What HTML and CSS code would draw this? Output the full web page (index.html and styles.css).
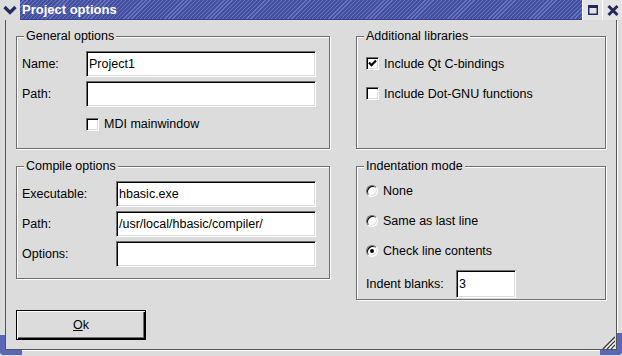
FILE: index.html
```html
<!DOCTYPE html>
<html lang="en">

<head>
    <meta charset="UTF-8">
    <meta name="viewport" content="width=device-width, initial-scale=1.0">
    <title>Project options</title>
    <link rel="stylesheet" href="styles.css">
</head>

<body>

    <div class="window">

        <!-- Title bar -->
        <div class="titlebar">
            <div class="tb-menu">
                <svg width="14" height="10" viewBox="0 0 14 10">
                    <polyline points="1.5,2 7,7.5 12.5,2" fill="none" stroke="#232a5c" stroke-width="3.2" />
                </svg>
            </div>
            <div class="tb-title">Project options</div>
            <div class="tb-btn">
                <svg width="20" height="20" viewBox="0 0 20 20">
                    <rect x="5" y="5" width="10" height="3" fill="#232a5c" />
                    <rect x="5.75" y="5.75" width="8.5" height="8.5" fill="none" stroke="#232a5c" stroke-width="1.5" />
                </svg>
            </div>
            <div class="tb-btn">
                <svg width="20" height="20" viewBox="0 0 20 20">
                    <path d="M5.5 6 L14.5 15 M14.5 6 L5.5 15" stroke="#232a5c" stroke-width="3" />
                </svg>
            </div>
        </div>

        <!-- Client area -->
        <div class="frame">
            <div class="client">
                <div class="columns">

                    <div class="col col-left">
                        <div class="group group-short">
                            <div class="group-title">General options</div>
                            <div class="form form-general">
                                <label>Name:</label>
                                <input class="edit" type="text" value="Project1">
                                <label>Path:</label>
                                <input class="edit" type="text" value="">
                                <div class="opt opt-grid"><span class="check"></span>MDI mainwindow</div>
                            </div>
                        </div>

                        <div class="group group-short">
                            <div class="group-title">Compile options</div>
                            <div class="form form-compile">
                                <label>Executable:</label>
                                <input class="edit" type="text" value="hbasic.exe">
                                <label>Path:</label>
                                <input class="edit" type="text" value="/usr/local/hbasic/compiler/">
                                <label>Options:</label>
                                <input class="edit" type="text" value="">
                            </div>
                        </div>

                        <button class="ok-btn"><u>O</u>k</button>
                    </div>

                    <div class="col col-right">
                        <div class="group group-short">
                            <div class="group-title">Additional libraries</div>
                            <div class="opt-list">
                                <div class="opt">
                                    <span class="check">
                                        <svg width="11" height="11" viewBox="0 0 11 11">
                                            <path d="M2 4.5 L4.5 7.2 L9 2.5" fill="none" stroke="#000" stroke-width="2.2" />
                                        </svg>
                                    </span>Include Qt C-bindings
                                </div>
                                <div class="opt"><span class="check"></span>Include Dot-GNU functions</div>
                            </div>
                        </div>

                        <div class="group group-tall">
                            <div class="group-title">Indentation mode</div>
                            <div class="opt-list opt-radios">
                                <div class="opt"><span class="radio"></span>None</div>
                                <div class="opt"><span class="radio"></span>Same as last line</div>
                                <div class="opt"><span class="radio checked"></span>Check line contents</div>
                            </div>
                            <div class="indent-row">
                                <label>Indent blanks:</label>
                                <input class="edit edit-small" type="text" value="3">
                            </div>
                        </div>
                    </div>

                </div>
            </div>
        </div>

        <!-- Window frame corners -->
        <div class="corner corner-bl"></div>
        <div class="corner corner-br"></div>
        <svg class="grip" width="13" height="13" viewBox="0 0 13 13">
            <path d="M1 13 L13 1 M5 13 L13 5 M9 13 L13 9" stroke="#3a3a3a" stroke-width="1.5" />
            <path d="M3 13 L13 3 M7 13 L13 7 M11 13 L13 11" stroke="#fff" stroke-width="1.2" />
        </svg>

    </div>

</body>

</html>
```

FILE: styles.css
```css
/* General */
* {
    box-sizing: border-box;
}

body {
    margin: 0;
    width: 622px;
    height: 356px;
    overflow: hidden;
    background-color: #dcdcdc;
    font-family: "Liberation Sans", Arial, sans-serif;
    font-size: 12.5px;
    color: #000;
}

.window {
    position: relative;
    height: 356px;
    display: flex;
    flex-direction: column;
}

/* Title bar */
.titlebar {
    display: flex;
    height: 20px;
}

.tb-menu {
    width: 20px;
    display: flex;
    align-items: center;
    justify-content: center;
    background-color: #dcdcdc;
}

.tb-title {
    flex: 1;
    padding-left: 2px;
    background: repeating-linear-gradient(135deg, #43509f 0 2px, #6774bf 2px 2.9px);
    border-bottom: 1px solid #36428a;
    color: #fff;
    font-weight: bold;
    font-size: 13px;
    line-height: 19px;
}

.tb-btn {
    width: 20px;
    background-color: #e4e4e4;
    border-left: 1px solid #fff;
}

.tb-btn svg {
    display: block;
}

/* Frame around the client area */
.frame {
    flex: 1;
    display: flex;
    padding: 0 5px 6px 5px;
}

.client {
    flex: 1;
    border: 1px solid #555;
    border-top: none;
    box-shadow: 1px 1px 0 #fff;
    padding: 16px 10px 0 10px;
}

.columns {
    display: flex;
    gap: 26px;
}

.col {
    display: flex;
    flex-direction: column;
    gap: 17px;
}

.col-left {
    width: 314px;
}

.col-right {
    width: 250px;
}

/* Group boxes */
.group {
    display: flex;
    flex-direction: column;
    border: 1px solid #6e6e6e;
    box-shadow: inset 1px 1px 0 #fff, 1px 1px 0 #fff;
    padding: 0 13px 0 5px;
}

.group-short {
    height: 113px;
}

.group-tall {
    height: 134px;
}

.group-title {
    align-self: flex-start;
    margin: -8px 0 0 2px;
    padding: 0 2px;
    background-color: #dcdcdc;
    line-height: 14px;
}

/* Label + field grids */
.form {
    display: grid;
    grid-auto-rows: 26px;
    row-gap: 4px;
    align-items: center;
    margin-top: 8px;
}

.form-general {
    grid-template-columns: 64px 1fr;
}

.form-compile {
    grid-template-columns: 94px 1fr;
}

.edit {
    width: 100%;
    height: 26px;
    margin: 0;
    padding: 0 2px;
    border: 1px solid;
    border-color: #6e6e6e #fff #fff #6e6e6e;
    box-shadow: inset 1px 1px 0 #000, inset -1px -1px 0 #dcdcdc;
    background-color: #fff;
    font: inherit;
    color: #000;
    outline: none;
}

.edit-small {
    width: 60px;
    height: 28px;
}

/* Check boxes and radio buttons */
.opt {
    display: flex;
    align-items: center;
    gap: 5px;
    height: 13px;
    white-space: nowrap;
}

.opt-grid {
    grid-column: 2;
}

.opt-list {
    display: flex;
    flex-direction: column;
    gap: 17px;
    margin: 14px 0 0 4px;
}

.opt-radios {
    margin-top: 11px;
}

.check {
    width: 13px;
    height: 13px;
    flex: none;
    border: 1px solid;
    border-color: #6e6e6e #fff #fff #6e6e6e;
    box-shadow: inset 1px 1px 0 #000, inset -1px -1px 0 #dcdcdc;
    background-color: #fff;
}

.check svg {
    display: block;
}

.radio {
    position: relative;
    width: 12px;
    height: 12px;
    flex: none;
    border-radius: 50%;
    border: 1px solid;
    border-color: #6e6e6e #fff #fff #6e6e6e;
    box-shadow: inset 1px 1px 0 #000, inset -1px -1px 0 #dcdcdc;
    background-color: #fff;
}

.radio.checked::after {
    content: "";
    position: absolute;
    top: 3px;
    left: 3px;
    width: 4px;
    height: 4px;
    border-radius: 50%;
    background-color: #000;
}

.indent-row {
    display: flex;
    align-items: center;
    margin: 13px 0 0 4px;
}

.indent-row label {
    width: 90px;
}

/* Ok button */
.ok-btn {
    width: 130px;
    height: 30px;
    margin-top: 14px;
    border: 1px solid #000;
    background-color: #dcdcdc;
    box-shadow: inset 1px 1px 0 #fff, inset -1px -1px 0 #000, inset -2px -2px 0 #6e6e6e;
    font: inherit;
    color: #000;
    padding: 0;
}

/* Window corners */
.corner {
    position: absolute;
    bottom: 1px;
    width: 22px;
    border-bottom: 5px solid #5a67b7;
}

.corner-bl {
    left: 0;
    height: 20px;
    border-left: 5px solid #5a67b7;
    border-bottom-left-radius: 4px;
}

.corner-br {
    right: 0;
    height: 22px;
    border-right: 5px solid #5a67b7;
    border-bottom-right-radius: 4px;
}

.grip {
    position: absolute;
    right: 7px;
    bottom: 7px;
}
```
